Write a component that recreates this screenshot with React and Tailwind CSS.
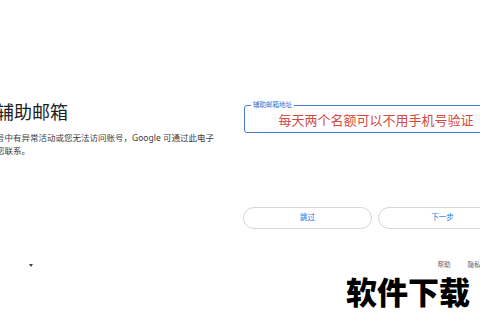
import React from "react";

const App = () => {
  return (
    <div className="relative w-[480px] h-[320px] overflow-hidden bg-white font-['Noto_Sans','Noto_Sans_CJK_SC',sans-serif]">
      <div className="flex items-start">
        {/* Left: heading + text */}
        <div className="w-[248px] -ml-[4px] pt-[100px] shrink-0">
          <h1 className="text-[18px] leading-[24px] font-normal text-[#202124]">
            辅助邮箱
          </h1>
          <p className="mt-[7px] text-[8.5px] leading-[13px] text-[#3c4043] whitespace-nowrap">
            号中有异常活动或您无法访问账号，Google 可通过此电子
            <br />
            您联系。
          </p>
        </div>

        {/* Right: field + buttons */}
        <div className="w-[264px] pt-[105px] shrink-0">
          <div className="relative h-[28px] border border-[#4a7ccc] rounded-[3px] flex items-center justify-center">
            <span className="absolute -top-[5px] left-[6px] bg-white px-[2px] text-[6.5px] leading-[8px] text-[#3b6fc9]">
              辅助邮箱地址
            </span>
            <span className="text-[13px] leading-[16px] text-[#d24a40] pt-[1px]">
              每天两个名额可以不用手机号验证
            </span>
          </div>

          <div className="mt-[74px] flex gap-[6px] -ml-[1px]">
            <button className="w-[129px] h-[22px] rounded-full border border-[#d4d6da] text-[7.5px] text-[#1a73e8] bg-white">
              跳过
            </button>
            <button className="w-[129px] h-[22px] rounded-full border border-[#d4d6da] text-[7.5px] text-[#1a73e8] bg-white">
              下一步
            </button>
          </div>
        </div>
      </div>

      {/* Footer */}
      <div className="mt-[31px] flex items-center h-[10px]">
        <span className="ml-[29px] w-0 h-0 border-l-[2px] border-r-[2px] border-t-[3px] border-l-transparent border-r-transparent border-t-[#444]" />
        <div className="ml-auto flex gap-[17px] -mr-[7px] text-[6.5px] text-[#5f6368]">
          <span>帮助</span>
          <span>隐私权</span>
        </div>
      </div>

      {/* Watermark */}
      <div className="absolute left-[346px] top-[273px] text-[31px] leading-[38px] font-black text-black">
        软件下载
      </div>
    </div>
  );
};

export default App;
